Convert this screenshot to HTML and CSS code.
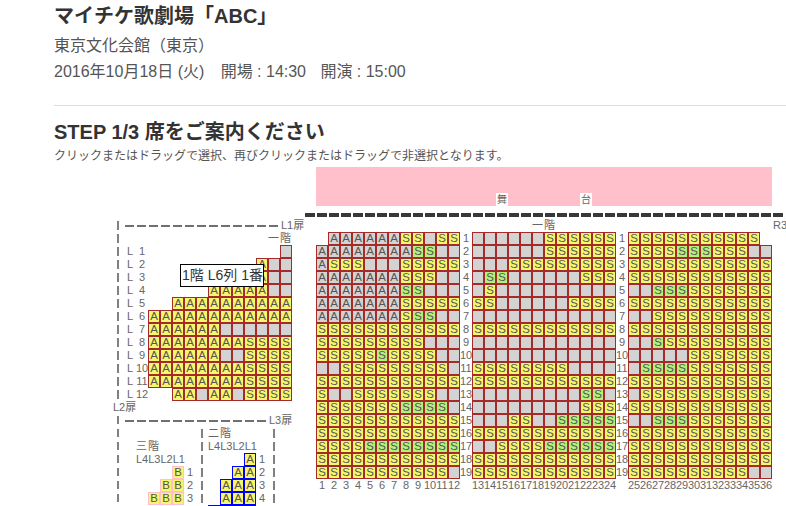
FILE: index.html
```html
<!DOCTYPE html>
<html lang="ja">
<head>
<meta charset="utf-8">
<title>マイチケ歌劇場「ABC」</title>
<link rel="stylesheet" href="styles.css">
</head>
<body>
<header class="head">
<h1>マイチケ歌劇場「ABC」</h1>
<p class="venue">東京文化会館（東京）</p>
<p class="date">2016年10月18日 (火)&nbsp;&nbsp;&nbsp;<span class="open">開場 : 14:30</span>&nbsp;&nbsp;&nbsp;<span class="start">開演 : 15:00</span></p>
<hr class="rule">
<h2>STEP 1/3 席をご案内ください</h2>
<p class="hint">クリックまたはドラッグで選択、再びクリックまたはドラッグで非選択となります。</p>
</header>
<main class="map">
<div class="stage"><span class="st1">舞</span><span class="st2">台</span></div>
<div class="stagebar"></div>
<span class="lb l1door">L1扉</span>
<span class="lb f1main">一階</span>
<span class="lb r3door">R3扉</span>
<span class="lb f1left">一階</span>
<span class="lb l2door">L2扉</span>
<span class="lb l3door">L3扉</span>
<span class="lb f2">二階</span>
<span class="lb f2cols">L4L3L2L1</span>
<span class="lb f3">三階</span>
<span class="lb f3cols">L4L3L2L1</span>
<div class="vl v1"></div><div class="vl v2"></div><div class="vl v3"></div><div class="vl v4"></div>
<div class="hl h1l"></div><div class="hl h2l"></div>

<ol class="rows lrows"><li><i>L</i><i>1</i><li><i>L</i><i>2</i><li><i>L</i><i>3</i><li><i>L</i><i>4</i><li><i>L</i><i>5</i><li><i>L</i><i>6</i><li><i>L</i><i>7</i><li><i>L</i><i>8</i><li><i>L</i><i>9</i><li><i>L</i><i>10</i><li><i>L</i><i>11</i><li><i>L</i><i>12</i></ol>

<table class="seats tl">
<tr><td class=e><td class=e><td class=e><td class=e><td class=e><td class=e><td class=e><td class=e><td class=e><td class=e><td class=e><td class=n>
<tr><td class=e><td class=e><td class=e><td class=e><td class=e><td class=e><td class=e><td class=e><td class=e><td>A<td class=n><td class=n>
<tr><td class=e><td class=e><td class=e><td class=e><td class=e><td class=e><td class=e><td>A<td>A<td>A<td class=n><td class=n>
<tr><td class=e><td class=e><td class=e><td class=e><td class=e><td>A<td>A<td>A<td>A<td>A<td class=n><td class=n>
<tr><td class=e><td class=e><td>A<td>A<td>A<td>A<td>A<td>A<td>A<td>A<td>A<td>A
<tr><td>A<td>A<td>A<td>A<td>A<td>A<td>A<td>A<td>A<td>A<td>A<td>A
<tr><td>A<td>A<td>A<td>A<td>A<td>A<td class=n><td class=n><td class=n><td class=n><td class=n><td class=n>
<tr><td>A<td>A<td>A<td>A<td>A<td>A<td>A<td>A<td>S<td>S<td>S<td>S
<tr><td>A<td>A<td>A<td>A<td>A<td>A<td class=n><td class=n><td>S<td>S<td>S<td>S
<tr><td>A<td>A<td>A<td>A<td>A<td>A<td>A<td>A<td>S<td>S<td>S<td>S
<tr><td>A<td>A<td>A<td>A<td>A<td>A<td>A<td>A<td>S<td>S<td>S<td>S
<tr><td class=e><td class=e><td>A<td>A<td class=n><td>A<td>A<td class=n><td>S<td>S<td>S<td>S
</table>

<table class="seats t1">
<tr><td class=e><td class=n>A<td class=n>A<td class=n>A<td class=n>A<td class=n>A<td class=n>A<td>S<td>S<td class=n><td>S<td>S
<tr><td class=n>A<td class=n>A<td class=n>A<td class=n>A<td class=n>A<td class=n>A<td class=n>A<td class=n>A<td class=g>S<td class=g>S<td class=n><td class=n>
<tr><td class=n>A<td>S<td>S<td>S<td class=n><td class=n><td class=n><td>S<td>S<td>S<td>S<td>S
<tr><td class=n>A<td class=n>A<td class=n>A<td class=n>A<td class=n>A<td class=n>A<td class=n>A<td>S<td>S<td>S<td class=n><td class=n>
<tr><td class=n>A<td class=n>A<td class=n>A<td class=n>A<td class=n>A<td class=n>A<td class=n>A<td class=g>S<td class=g>S<td class=n><td class=n><td class=n>
<tr><td class=n>A<td class=n>A<td class=n>A<td class=n>A<td class=n>A<td class=n>A<td class=n>A<td>S<td>S<td>S<td>S<td>S
<tr><td class=n>A<td class=n>A<td class=n>A<td class=n>A<td class=n>A<td class=n>A<td class=n>A<td>S<td class=g>S<td class=g>S<td class=n><td class=n>
<tr><td>S<td>S<td>S<td>S<td>S<td>S<td>S<td>S<td>S<td>S<td>S<td>S
<tr><td>S<td>S<td>S<td>S<td>S<td>S<td>S<td>S<td>S<td class=n><td class=n><td class=n>
<tr><td>S<td>S<td>S<td>S<td>S<td class=g>S<td>S<td>S<td>S<td>S<td class=n><td class=n>
<tr><td class=n><td class=n><td>S<td>S<td>S<td>S<td>S<td>S<td>S<td>S<td>S<td class=n>
<tr><td>S<td>S<td>S<td>S<td>S<td>S<td>S<td>S<td>S<td>S<td>S<td>S
<tr><td>S<td class=n><td class=n><td>S<td>S<td>S<td>S<td>S<td>S<td>S<td class=n><td class=n>
<tr><td>S<td>S<td>S<td>S<td>S<td>S<td>S<td class=g>S<td class=g>S<td class=g>S<td class=g>S<td class=n>
<tr><td>S<td>S<td>S<td>S<td>S<td>S<td>S<td>S<td>S<td>S<td>S<td>S
<tr><td>S<td>S<td>S<td>S<td>S<td>S<td>S<td>S<td>S<td>S<td>S<td>S
<tr><td>S<td>S<td>S<td>S<td class=g>S<td class=g>S<td class=g>S<td class=g>S<td class=g>S<td class=g>S<td class=g>S<td class=g>S
<tr><td>S<td>S<td>S<td>S<td>S<td>S<td>S<td>S<td>S<td>S<td>S<td>S
<tr><td>S<td>S<td>S<td>S<td>S<td>S<td>S<td>S<td>S<td>S<td>S<td class=n>
</table>

<ol class="rows r1"><li>1<li>2<li>3<li>4<li>5<li>6<li>7<li>8<li>9<li>10<li>11<li>12<li>13<li>14<li>15<li>16<li>17<li>18<li>19</ol>

<table class="seats t2">
<tr><td class=n><td class=n><td class=n><td class=n><td class=n><td class=n><td>S<td>S<td>S<td>S<td>S<td>S
<tr><td class=n><td class=n><td class=n><td class=n><td class=n><td class=n><td>S<td>S<td>S<td>S<td>S<td>S
<tr><td class=n><td class=n><td class=n><td>S<td>S<td>S<td>S<td>S<td>S<td>S<td>S<td>S
<tr><td class=n><td class=g>S<td class=g>S<td class=n><td class=n><td class=n><td class=n><td class=n><td class=n><td>S<td>S<td>S
<tr><td class=n><td>S<td class=n><td class=n><td class=n><td class=n><td class=n><td class=n><td class=n><td class=n><td class=n><td class=n>
<tr><td>S<td>S<td class=n><td class=n><td class=n><td class=n><td class=n><td class=n><td>S<td>S<td>S<td>S
<tr><td class=n><td class=n><td class=n><td class=n><td class=n><td class=n><td class=n><td class=n><td class=n><td class=n><td class=n><td class=n>
<tr><td>S<td>S<td>S<td>S<td>S<td>S<td>S<td>S<td>S<td>S<td>S<td>S
<tr><td class=n><td class=n><td class=n><td class=n><td class=n><td class=n><td class=n><td class=n><td class=n><td class=n><td class=n><td class=n>
<tr><td class=n><td class=n><td class=n><td class=n><td class=n><td class=n><td class=n><td class=n><td class=n><td class=n><td class=n><td class=n>
<tr><td>S<td>S<td>S<td>S<td>S<td>S<td>S<td>S<td class=n><td class=n><td class=n><td class=n>
<tr><td>S<td>S<td>S<td>S<td>S<td>S<td>S<td>S<td>S<td>S<td>S<td>S
<tr><td class=n><td class=n><td class=n><td class=n><td class=n><td class=n><td class=n><td class=n><td class=n><td class=g>S<td class=g>S<td class=n>
<tr><td class=n><td class=n><td class=n><td class=n><td class=n><td class=n><td class=n><td class=n><td class=n><td>S<td>S<td>S
<tr><td class=n><td class=n><td class=n><td>S<td>S<td class=n><td class=n><td class=g>S<td class=g>S<td class=g>S<td class=g>S<td class=g>S
<tr><td>S<td>S<td>S<td>S<td>S<td>S<td>S<td>S<td>S<td>S<td>S<td>S
<tr><td class=n><td class=n><td>S<td>S<td>S<td>S<td class=g>S<td class=g>S<td class=g>S<td class=g>S<td class=g>S<td class=g>S
<tr><td>S<td>S<td>S<td>S<td>S<td>S<td>S<td>S<td>S<td>S<td>S<td>S
<tr><td>S<td>S<td>S<td>S<td>S<td>S<td>S<td>S<td>S<td>S<td>S<td>S
</table>

<ol class="rows r2"><li>1<li>2<li>3<li>4<li>5<li>6<li>7<li>8<li>9<li>10<li>11<li>12<li>13<li>14<li>15<li>16<li>17<li>18<li>19</ol>

<table class="seats t3">
<tr><td>S<td>S<td>S<td>S<td>S<td>S<td>S<td>S<td>S<td>S<td>S<td class=e>
<tr><td>S<td>S<td>S<td>S<td class=g>S<td class=g>S<td class=g>S<td>S<td>S<td>S<td class=n><td class=n>
<tr><td>S<td>S<td>S<td>S<td>S<td>S<td>S<td>S<td>S<td>S<td>S<td>S
<tr><td>S<td>S<td>S<td>S<td>S<td>S<td>S<td>S<td>S<td>S<td>S<td>S
<tr><td class=n><td class=n><td class=g>S<td class=g>S<td class=g>S<td>S<td>S<td>S<td>S<td>S<td>S<td>S
<tr><td>S<td>S<td>S<td>S<td>S<td>S<td>S<td>S<td>S<td>S<td>S<td>S
<tr><td class=n><td class=n><td>S<td>S<td>S<td>S<td>S<td>S<td>S<td>S<td>S<td>S
<tr><td>S<td>S<td>S<td>S<td>S<td>S<td>S<td>S<td>S<td>S<td>S<td>S
<tr><td class=n><td class=n><td class=g>S<td>S<td>S<td>S<td>S<td>S<td>S<td>S<td>S<td>S
<tr><td class=n><td class=n><td class=n><td class=n><td class=n><td>S<td>S<td>S<td>S<td>S<td>S<td>S
<tr><td class=n><td class=g>S<td class=g>S<td class=g>S<td class=g>S<td>S<td>S<td>S<td>S<td>S<td>S<td>S
<tr><td>S<td>S<td>S<td>S<td>S<td>S<td>S<td>S<td>S<td>S<td>S<td>S
<tr><td class=n><td>S<td>S<td>S<td>S<td>S<td>S<td>S<td>S<td>S<td>S<td>S
<tr><td>S<td>S<td>S<td>S<td>S<td>S<td>S<td>S<td>S<td>S<td>S<td>S
<tr><td class=n><td class=n><td class=g>S<td class=g>S<td class=g>S<td>S<td>S<td>S<td>S<td>S<td>S<td>S
<tr><td>S<td>S<td>S<td>S<td>S<td>S<td>S<td>S<td>S<td>S<td>S<td>S
<tr><td>S<td>S<td>S<td>S<td>S<td>S<td>S<td>S<td>S<td>S<td>S<td>S
<tr><td>S<td>S<td>S<td>S<td>S<td>S<td>S<td>S<td>S<td>S<td>S<td>S
<tr><td>S<td>S<td>S<td>S<td>S<td>S<td>S<td>S<td>S<td>S<td class=n><td class=n>
</table>

<ol class="cols c1"><li>1<li>2<li>3<li>4<li>5<li>6<li>7<li>8<li>9<li>10<li>11<li>12</ol>
<ol class="cols c2"><li>13<li>14<li>15<li>16<li>17<li>18<li>19<li>20<li>21<li>22<li>23<li>24</ol>
<ol class="cols c3"><li>25<li>26<li>27<li>28<li>29<li>30<li>31<li>32<li>33<li>34<li>35<li>36</ol>

<table class="seats pink">
<tr><td class=e><td class=e><td class=e><td>B
<tr><td class=e><td class=e><td>B<td>B
<tr><td class=e><td>B<td>B<td>B
</table>
<ol class="rows r3"><li>1<li>2<li>3</ol>

<table class="seats blue">
<tr><td class=e><td class=e><td class=e><td>A
<tr><td class=e><td class=e><td>A<td>A
<tr><td class=e><td>A<td>A<td>A
<tr><td class=e><td>A<td>A<td>A
<tr><td><td><td><td>
</table>
<ol class="rows r4"><li>1<li>2<li>3<li>4</ol>

<div class="tip">1階 L6列 1番</div>
</main>
</body>
</html>
```
FILE: styles.css
```css
html, body { margin: 0; padding: 0; overflow: hidden; background: #fff; }
body { font-family: "Liberation Sans", "Noto Sans CJK JP", sans-serif; color: #555; }

.head { padding-left: 54px; }
.head h1 { margin: 0; padding-top: 3px; font-size: 20px; line-height: 26px; font-weight: bold; color: #333; }
.venue { margin: 4px 0 0; font-size: 16px; line-height: 26px; }
.date { margin: 0; font-size: 16px; line-height: 26px; }
.open { margin-left: 3px; }
.start { margin-left: 1px; }
.rule { margin: 20px 0 0; border: 0; height: 1px; background: #ddd; }
.head h2 { margin: 13px 0 0; font-size: 20px; line-height: 26px; font-weight: bold; color: #333; }
.hint { margin: 2px 0 0; font-size: 12px; line-height: 18px; }

.map {
  position: relative;
  margin: 2px 0 0 112px;
  display: grid;
  grid-template-columns: repeat(56, 12px);
  grid-template-rows: repeat(27, 13px);
  font-size: 11px;
  line-height: 13px;
  color: #666;
}

.stage {
  grid-column: 18 / span 38;
  grid-row: 1 / span 3;
  background: #ffc0cb;
  display: grid;
  grid-template-columns: repeat(38, 12px);
  grid-template-rows: repeat(3, 13px);
}
.st1, .st2 { grid-row: 3; background: #fff; text-align: center; font-size: 10px; }
.st1 { grid-column: 16; }
.st2 { grid-column: 23; }

.stagebar {
  grid-column: 17 / span 40;
  grid-row: 4;
  margin-top: 7px;
  height: 4px;
  background: repeating-linear-gradient(to right, #383838 0 10px, transparent 10px 12px);
  background-position: 1px 0;
}

.lb { white-space: nowrap; }
.l1door { grid-column: 15 / span 3; grid-row: 5; padding-left: 1px; }
.f1main { grid-column: 36 / span 2; grid-row: 5; letter-spacing: 1px; }
.r3door { grid-column: 56; grid-row: 5; padding-left: 1px; }
.f1left { grid-column: 14 / span 2; grid-row: 6; letter-spacing: 1px; }
.l2door { grid-column: 1 / span 3; grid-row: 19; padding-left: 1px; }
.l3door { grid-column: 14 / span 3; grid-row: 20; padding-left: 1px; }
.f2 { grid-column: 9 / span 2; grid-row: 21; letter-spacing: 1px; }
.f2cols { grid-column: 9 / span 4; grid-row: 22; }
.f3 { grid-column: 3 / span 2; grid-row: 22; letter-spacing: 1px; }
.f3cols { grid-column: 3 / span 4; grid-row: 23; }

.vl {
  width: 2px;
  justify-self: center;
  background: repeating-linear-gradient(to bottom, transparent 0 2px, #808080 2px 10.5px, transparent 10.5px 13px);
}
.v1 { grid-column: 1; grid-row: 5 / span 14; }
.v2 { grid-column: 1; grid-row: 20 / span 8; }
.v3 { grid-column: 8; grid-row: 21 / span 7; }
.v4 { grid-column: 14; grid-row: 21 / span 7; }

.hl {
  height: 2px;
  align-self: center;
  background: repeating-linear-gradient(to right, transparent 0 1px, #707070 1px 10px, transparent 10px 12px);
}
.h1l { grid-column: 2 / span 13; grid-row: 5; }
.h2l { grid-column: 2 / span 12; grid-row: 20; }

.rows, .cols { list-style: none; margin: 0; padding: 0; }
.rows li { height: 13px; text-align: center; white-space: nowrap; }
.rows i { display: inline-block; width: 12px; text-align: center; font-style: normal; }
.lrows { grid-column: 2 / span 2; grid-row: 7 / span 12; }
.r1 { grid-column: 30; grid-row: 6 / span 19; }
.r2 { grid-column: 43; grid-row: 6 / span 19; }
.r3 { grid-column: 7; grid-row: 24 / span 3; }
.r4 { grid-column: 13; grid-row: 23 / span 4; }

.cols { display: flex; grid-row: 25; padding-top: 0; }
.cols li { flex: none; width: 12px; text-align: center; white-space: nowrap; }
.c1 { grid-column: 18 / span 12; }
.c2 { grid-column: 31 / span 12; }
.c3 { grid-column: 44 / span 12; }

.seats { border-collapse: separate; border-spacing: 0; }
.seats td {
  box-sizing: border-box;
  width: 12px;
  height: 13px;
  padding: 0;
  border: 1px solid #a52a2a;
  background: #f7f76e;
  color: #555;
  font-size: 11.5px;
  line-height: 11px;
  text-align: center;
}
.seats td.n { background: #d3d3d3; }
.seats td.g { background: #b4f07c; }
.seats td.e { border: 0; background: transparent; }
.pink td { border-color: #ffc0cb; }
.blue td { border-color: #0000ff; }

.tl { grid-column: 4 / span 12; grid-row: 7 / span 12; }
.t1 { grid-column: 18 / span 12; grid-row: 6 / span 19; }
.t2 { grid-column: 31 / span 12; grid-row: 6 / span 19; }
.t3 { grid-column: 44 / span 12; grid-row: 6 / span 19; }
.pink { grid-column: 3 / span 4; grid-row: 24 / span 3; }
.blue { grid-column: 9 / span 4; grid-row: 23 / span 5; }

.tip {
  position: absolute;
  left: 68px;
  top: 97px;
  padding: 2px 0 2px 1px;
  border: 1px solid #000;
  background: #fff;
  color: #333;
  font-size: 14px;
  line-height: 17px;
  white-space: nowrap;
}
```
